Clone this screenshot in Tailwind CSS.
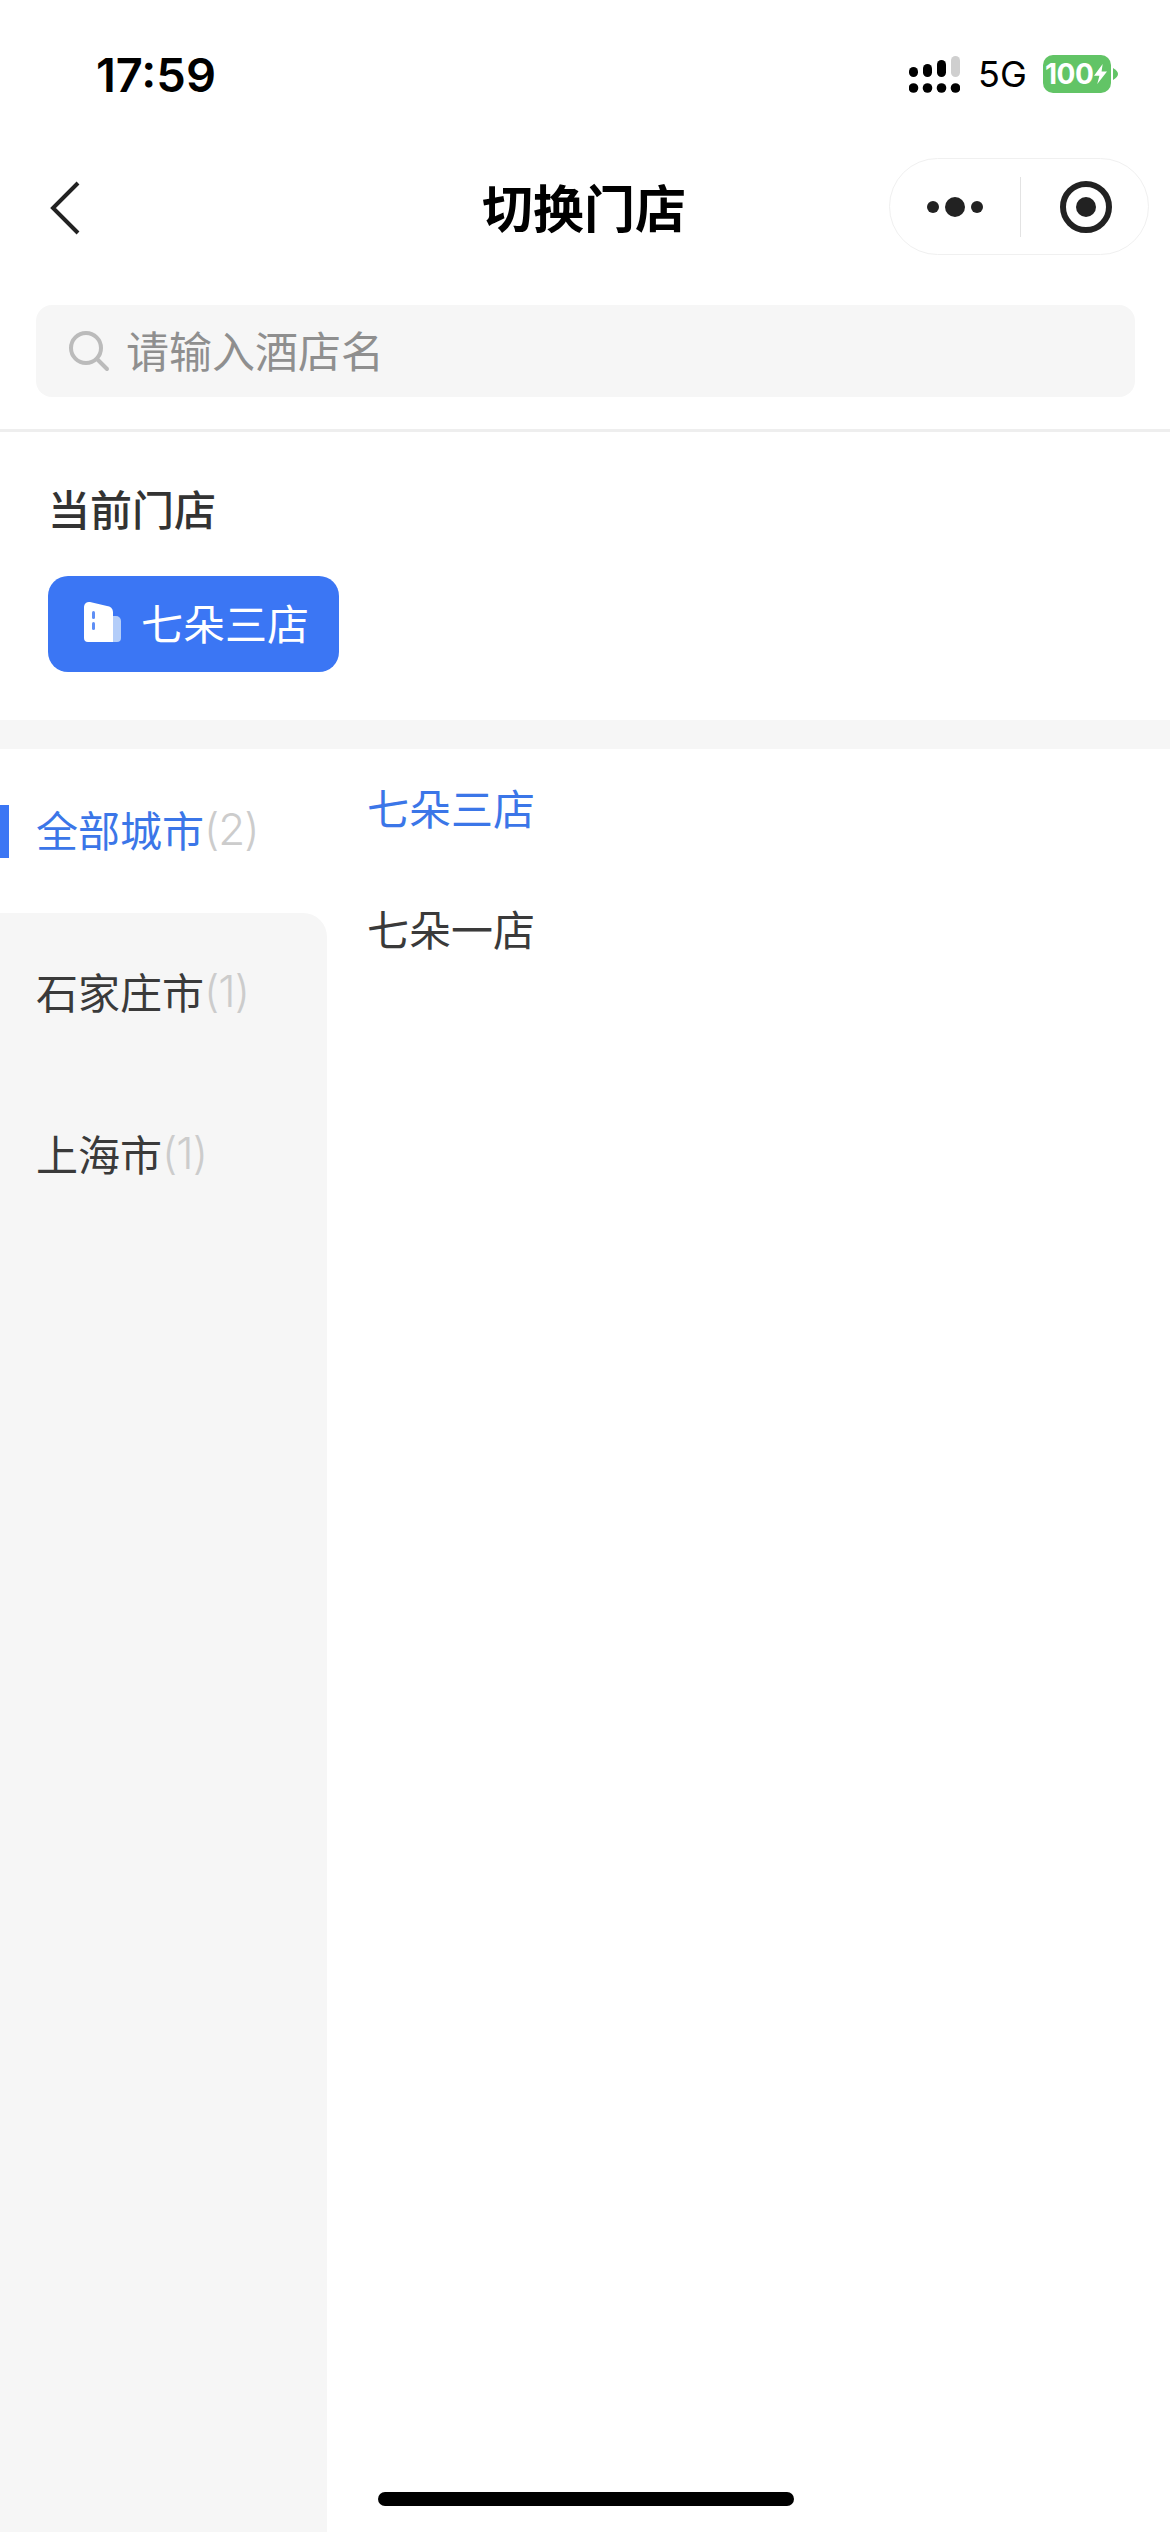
<!DOCTYPE html>
<html lang="zh">
<head>
<meta charset="utf-8">
<script src="https://cdn.jsdelivr.net/npm/@tailwindcss/browser@4"></script>
</head>
<body class="bg-white">
<div class="relative w-[1170px] h-[2532px] overflow-hidden bg-white flex flex-col font-['Noto_Sans_CJK_SC','Noto_Sans',sans-serif] text-[42px] leading-none text-[#3a3a3a]">
  <!-- status bar -->
  <div class="h-[148px] shrink-0 flex items-center justify-between pl-[96px] pr-[52px]">
    <span class="font-['Inter',sans-serif] font-semibold text-[47px] text-black">17:59</span>
    <div class="flex items-center">
      <svg width="51" height="37" viewBox="0 0 51 37" class="fill-black mr-[18px]">
        <rect x="0" y="11" width="9" height="10" rx="4.5"/><rect x="14" y="8" width="9" height="13" rx="4.5"/><rect x="28" y="4" width="9" height="17" rx="4.5"/><rect x="42" y="0" width="9" height="21" rx="4.5" class="fill-[#cfcfcf]"/>
        <circle cx="4.5" cy="32" r="4.8"/><circle cx="18.5" cy="32" r="4.8"/><circle cx="32.5" cy="32" r="4.8"/><circle cx="46.5" cy="32" r="4.8"/>
      </svg>
      <span class="w-[48px] whitespace-nowrap font-['Inter',sans-serif] text-[36px] text-black mr-[17px]">5G</span>
      <div class="w-[68px] h-[38px] rounded-[10px] bg-[#62c466] flex items-center pl-[2px] font-['Inter',sans-serif] font-bold text-[28px] text-white tracking-[-0.5px]">100<svg width="13" height="20" viewBox="0 0 12 24" preserveAspectRatio="none" class="fill-white ml-[1px]"><path d="M8 0 0 14h5l-2 10 9-15H7z"/></svg></div>
      <svg width="5" height="12" viewBox="0 0 5 12" class="fill-[#62c466] ml-[2px]"><path d="M0 0q5 3 5 6T0 12z"/></svg>
    </div>
  </div>
  <!-- nav -->
  <div class="relative h-[120px] shrink-0 flex items-center justify-center">
    <svg width="32" height="54" viewBox="0 0 32 54" class="absolute left-[50px] top-[33px] fill-none stroke-[#222] stroke-[4]"><path d="M28 2 3 27l25 25"/></svg>
    <span class="font-bold text-[51px] text-black pb-[4px] pr-[2px]">切换门店</span>
    <div class="absolute left-[889px] top-[10px] w-[260px] h-[97px] rounded-full border border-[#f0f0f0] flex items-center">
      <div class="w-[130px] flex justify-center items-center gap-[6px]">
        <span class="w-[12px] h-[12px] rounded-full bg-[#222]"></span><span class="w-[20px] h-[20px] rounded-full bg-[#222]"></span><span class="w-[12px] h-[12px] rounded-full bg-[#222]"></span>
      </div>
      <div class="w-px h-[60px] bg-[#e3e3e3]"></div>
      <div class="flex-1 flex justify-center pl-[2px]">
        <div class="w-[52px] h-[52px] rounded-full border-[6px] border-[#222] flex items-center justify-center"><div class="w-[20px] h-[20px] rounded-full bg-[#222]"></div></div>
      </div>
    </div>
  </div>
  <!-- search -->
  <div class="shrink-0 pt-[37px] pb-[32px] pl-[36px] pr-[35px] border-b-[3px] border-[#eeeeee]">
    <div class="h-[92px] rounded-[16px] bg-[#f6f6f6] flex items-center pl-[32px] gap-[16px]">
      <svg width="42" height="42" viewBox="0 0 42 42" class="fill-none stroke-[#bbb] stroke-[4]"><circle cx="18" cy="18" r="15"/><path d="m29 29 10 10" stroke-linecap="round"/></svg>
      <span class="text-[#8f8f8f] text-[43px] pb-[3px]">请输入酒店名</span>
    </div>
  </div>
  <!-- current store -->
  <div class="shrink-0 h-[288px] pl-[48px] pt-[55px]">
    <div class="font-medium text-[#333] leading-[42px]">当前门店</div>
    <div class="mt-[47px] w-[291px] h-[96px] rounded-[20px] bg-[#3b76f4] flex items-center pl-[36px] gap-[20px] text-white">
      <svg width="37" height="41" viewBox="0 0 37 41" class="mb-[5px]">
        <path d="M29 15h3a5 5 0 0 1 5 5v17a4 4 0 0 1-4 4h-4z" fill="#b3cdf9"/>
        <path d="M0 6a5 5 0 0 1 6-5l17 4a6 6 0 0 1 6 6v30H4a4 4 0 0 1-4-4z" fill="#fff"/>
        <rect x="8" y="10" width="3" height="8" rx="1.5" fill="#5f8ff5"/><rect x="8" y="21" width="3" height="8" rx="1.5" fill="#5f8ff5"/>
      </svg>
      <span class="pb-[4px]">七朵三店</span>
    </div>
  </div>
  <div class="shrink-0 h-[29px] bg-[#f6f6f6]"></div>
  <!-- list -->
  <div class="flex-1 flex min-h-0">
    <div class="w-[327px] shrink-0 flex flex-col">
      <div class="relative h-[164px] flex items-center pl-[36px] pb-[5px] text-[#3b76e8]">
        <div class="absolute left-0 top-[56px] w-[9px] h-[53px] bg-[#3b76f4]"></div>
        全部城市<span class="text-[#ccc] text-[44px] tracking-[-1px] font-['Inter',sans-serif] font-light">(2)</span>
      </div>
      <div class="flex-1 rounded-tr-[24px] bg-[#f6f6f6]">
        <div class="h-[162px] flex items-center pl-[36px] pb-[7px]">石家庄市<span class="text-[#ccc] text-[44px] tracking-[-1px] font-['Inter',sans-serif] font-light">(1)</span></div>
        <div class="h-[162px] flex items-center pl-[36px] pb-[7px]">上海市<span class="text-[#ccc] text-[44px] tracking-[-1px] font-['Inter',sans-serif] font-light">(1)</span></div>
      </div>
    </div>
    <div class="flex-1 pl-[40px]">
      <div class="h-[120px] flex items-center pb-[4px] text-[#3b76e8]">七朵三店</div>
      <div class="h-[120px] flex items-center pb-[2px]">七朵一店</div>
    </div>
  </div>
  <div class="absolute left-[378px] top-[2492px] w-[416px] h-[14px] rounded-full bg-black"></div>
</div>
</body>
</html>
